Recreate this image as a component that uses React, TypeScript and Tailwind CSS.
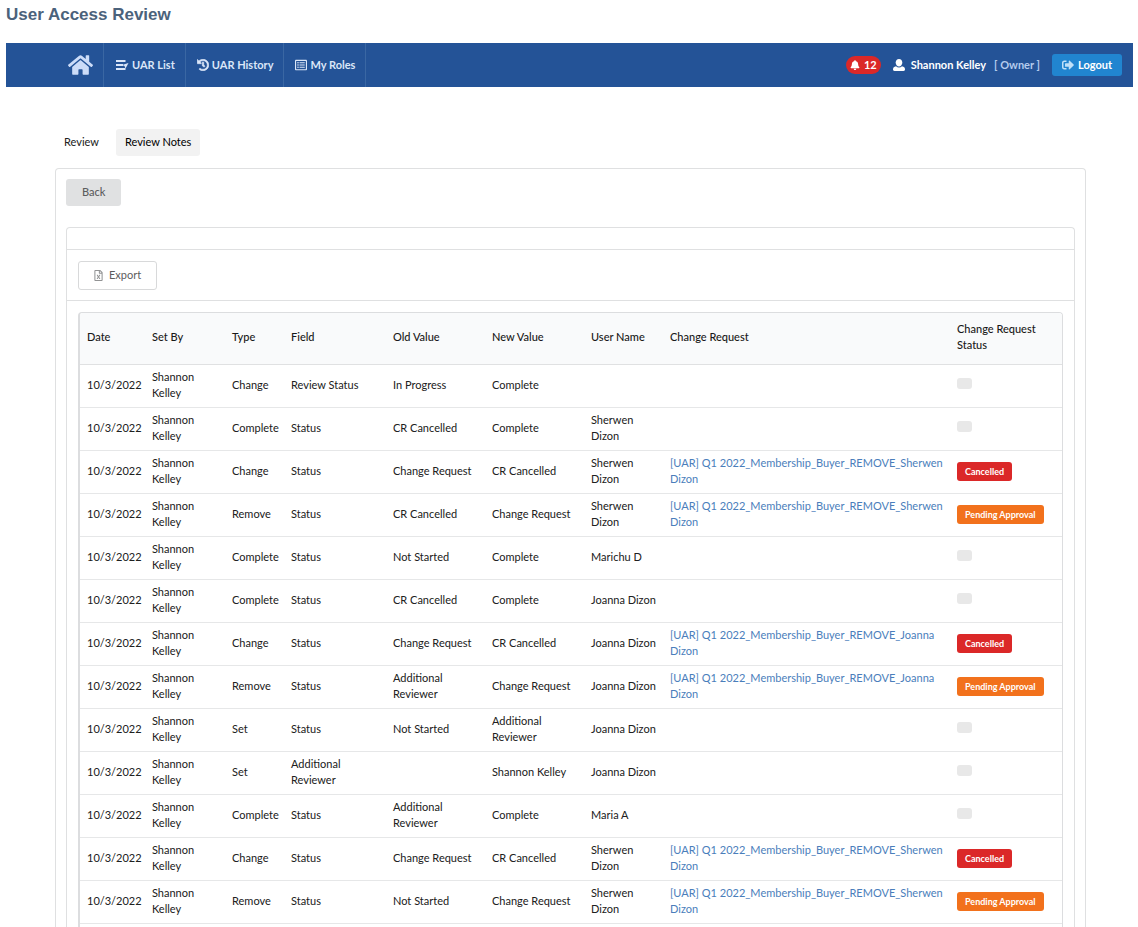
import { FaBell, FaHistory, FaHome, FaRegFileExcel, FaRegListAlt, FaSignOutAlt } from 'react-icons/fa'

type Note = {
  type: string
  field: string
  oldValue: string
  newValue: string
  userName: string
  request?: string
  status?: 'Cancelled' | 'Pending Approval'
}

const SHERWEN = '[UAR] Q1 2022_Membership_Buyer_REMOVE_Sherwen Dizon'
const JOANNA = '[UAR] Q1 2022_Membership_Buyer_REMOVE_Joanna Dizon'

const notes: Note[] = [
  { type: 'Change', field: 'Review Status', oldValue: 'In Progress', newValue: 'Complete', userName: '' },
  { type: 'Complete', field: 'Status', oldValue: 'CR Cancelled', newValue: 'Complete', userName: 'Sherwen Dizon' },
  { type: 'Change', field: 'Status', oldValue: 'Change Request', newValue: 'CR Cancelled', userName: 'Sherwen Dizon', request: SHERWEN, status: 'Cancelled' },
  { type: 'Remove', field: 'Status', oldValue: 'CR Cancelled', newValue: 'Change Request', userName: 'Sherwen Dizon', request: SHERWEN, status: 'Pending Approval' },
  { type: 'Complete', field: 'Status', oldValue: 'Not Started', newValue: 'Complete', userName: 'Marichu D' },
  { type: 'Complete', field: 'Status', oldValue: 'CR Cancelled', newValue: 'Complete', userName: 'Joanna Dizon' },
  { type: 'Change', field: 'Status', oldValue: 'Change Request', newValue: 'CR Cancelled', userName: 'Joanna Dizon', request: JOANNA, status: 'Cancelled' },
  { type: 'Remove', field: 'Status', oldValue: 'Additional Reviewer', newValue: 'Change Request', userName: 'Joanna Dizon', request: JOANNA, status: 'Pending Approval' },
  { type: 'Set', field: 'Status', oldValue: 'Not Started', newValue: 'Additional Reviewer', userName: 'Joanna Dizon' },
  { type: 'Set', field: 'Additional Reviewer', oldValue: '', newValue: 'Shannon Kelley', userName: 'Joanna Dizon' },
  { type: 'Complete', field: 'Status', oldValue: 'Additional Reviewer', newValue: 'Complete', userName: 'Maria A' },
  { type: 'Change', field: 'Status', oldValue: 'Change Request', newValue: 'CR Cancelled', userName: 'Sherwen Dizon', request: SHERWEN, status: 'Cancelled' },
  { type: 'Remove', field: 'Status', oldValue: 'Not Started', newValue: 'Change Request', userName: 'Sherwen Dizon', request: SHERWEN, status: 'Pending Approval' },
]

const columns = [
  { label: 'Date', width: 'w-[65px]' },
  { label: 'Set By', width: 'w-[80px]' },
  { label: 'Type', width: 'w-[59px]' },
  { label: 'Field', width: 'w-[102px]' },
  { label: 'Old Value', width: 'w-[99px]' },
  { label: 'New Value', width: 'w-[99px]' },
  { label: 'User Name', width: 'w-[79px]' },
  { label: 'Change Request', width: '' },
  { label: 'Change Request Status', width: 'w-[112px]' },
]

function ListIcon() {
  return (
    <svg viewBox="0 0 14 12" className="w-[14px] h-3" fill="none" stroke="currentColor" strokeWidth="2">
      <path d="M1 2H10.5M1 6H8M1 10H10.5" />
      <path d="M7 6L13.5 4L10.5 9.5L9.5 7Z" fill="currentColor" stroke="none" />
    </svg>
  )
}

function UserIcon() {
  return (
    <svg viewBox="0 0 12 12" className="size-3 ml-3 text-white" fill="currentColor">
      <path d="M6 0C8.1 0 9.3 1.5 9.3 3.6S8 7.6 6 7.6S2.7 5.700 2.700 3.600S3.900 0 6 0Z" />
      <path d="M3 7.200C4.700 8.900 7.300 8.900 9 7.200C11 7.500 12 8.700 12 10.300C12 11.300 11.500 12 10.500 12H1.500C0.500 12 0 11.300 0 10.300C0 8.700 1 7.500 3 7.200Z" />
    </svg>
  )
}

function NavBar() {
  const item = 'flex items-center gap-[3px] pl-[11px] pr-[10px] border-r border-[#3a67a3]'
  return (
    <nav className="flex h-11 bg-[#245397] text-[#dbe6f8] text-[11px] font-bold pl-[51px] pr-[11px]">
      <a href="#" aria-label="Home" className={item}>
        <FaHome className="size-[25px] pb-px text-[#ccdcf8]" />
      </a>
      <a href="#" className={item}>
        <ListIcon />
        UAR List
      </a>
      <a href="#" className={item}>
        <FaHistory className="size-3" stroke="currentColor" strokeWidth="24" />
        UAR History
      </a>
      <a href="#" className={item}>
        <FaRegListAlt className="size-3" />
        My Roles
      </a>
      <div className="ml-auto flex items-center">
        <span className="flex items-center gap-1 h-[18px] px-1 rounded-full bg-[#db2828] text-white">
          <FaBell className="size-[10px]" />
          12
        </span>
        <UserIcon />
        <span className="ml-[6px] text-white">Shannon Kelley</span>
        <span className="ml-2 text-[#b5cbed]">[ Owner ]</span>
        <button className="ml-3 flex items-center gap-1 h-[22px] px-[10px] rounded-[3px] bg-[#2185d0] text-white">
          <FaSignOutAlt className="size-3 text-[#bfe0f8]" />
          Logout
        </button>
      </div>
    </nav>
  )
}

function StatusLabel({ status }: { status?: Note['status'] }) {
  if (!status) {
    return <span className="block w-[15px] h-[11px] mb-1 rounded-[3px] bg-[#e8e8e8]" />
  }
  const color = status === 'Cancelled' ? 'bg-[#db2828]' : 'bg-[#f2711c]'
  return (
    <span className={`block w-fit h-[19px] leading-[19px] px-2 rounded-[3px] text-[9px] font-bold text-white whitespace-nowrap ${color}`}>
      {status}
    </span>
  )
}

function NotesTable() {
  return (
    <table className="w-full table-fixed border-separate border-spacing-0 text-left text-[11px] leading-4">
      <thead className="bg-[#f9fafb]">
        <tr>
          {columns.map((c) => (
            <th key={c.label} className={`h-[52px] pl-[7px] pr-1 pb-[3px] font-medium border-b border-[#e0e1e2] text-[#191919] ${c.width}`}>
              {c.label}
            </th>
          ))}
        </tr>
      </thead>
      <tbody className="[&_td]:h-[43px] [&_td]:pl-[7px] [&_td]:pr-1 [&_td]:pb-[3px] [&_td:last-child]:pb-px [&_td]:border-b [&_td]:border-[#e6e7e8]">
        {notes.map((n, i) => (
          <tr key={i}>
            <td>10/3/2022</td>
            <td>Shannon Kelley</td>
            <td>{n.type}</td>
            <td>{n.field}</td>
            <td>{n.oldValue}</td>
            <td>{n.newValue}</td>
            <td>{n.userName}</td>
            <td>{n.request && <a href="#" className="text-[#4a7ebb]">{n.request}</a>}</td>
            <td><StatusLabel status={n.status} /></td>
          </tr>
        ))}
      </tbody>
    </table>
  )
}

export default function App() {
  return (
    <div className="min-h-screen flex flex-col bg-white pl-[6px] pr-[5px] text-[#202020] font-[Lato,sans-serif]">
      <h1 className="pt-[5px] h-[43px] text-[17px] leading-5 font-bold text-[#4b627b] font-['Liberation_Sans',sans-serif]">
        User Access Review
      </h1>
      <NavBar />
      <main className="flex-1 flex flex-col pl-[49px] pr-[47px] pt-[42px]">
        <div className="flex gap-2 text-[11px]">
          <button className="h-[27px] px-[9px] pb-px">Review</button>
          <button className="h-[27px] px-[9px] pb-px rounded-[3px] bg-[#f2f2f2] text-black">Review Notes</button>
        </div>
        <section className="flex-1 flex flex-col mt-3 px-[10px] pt-[10px] border border-b-0 border-[#dfe0e1] rounded-t-[4px]">
          <button className="self-start h-[27px] px-4 pb-px rounded-[3px] bg-[#e0e1e2] text-[11px] font-medium text-[#5c5d5e]">Back</button>
          <div className="flex-1 flex flex-col mt-[21px] border border-b-0 border-[#dfe0e1] rounded-t-[4px]">
            <div className="h-[22px] border-b border-[#dfe0e1]" />
            <div className="p-[11px] pb-[10px] border-b border-[#dfe0e1]">
              <button className="flex items-center gap-[6px] h-[29px] px-[15px] border border-[#d8d9da] rounded-[3px] text-[11px] text-[#5c5d5e]">
                <FaRegFileExcel className="w-[9px] h-[11px] text-[#929394]" />
                Export
              </button>
            </div>
            <div className="flex-1 mx-[11px] mt-[11px] border border-l-2 border-b-0 border-[#dcdddf] rounded-t-[4px] overflow-hidden">
              <NotesTable />
            </div>
          </div>
        </section>
      </main>
    </div>
  )
}
